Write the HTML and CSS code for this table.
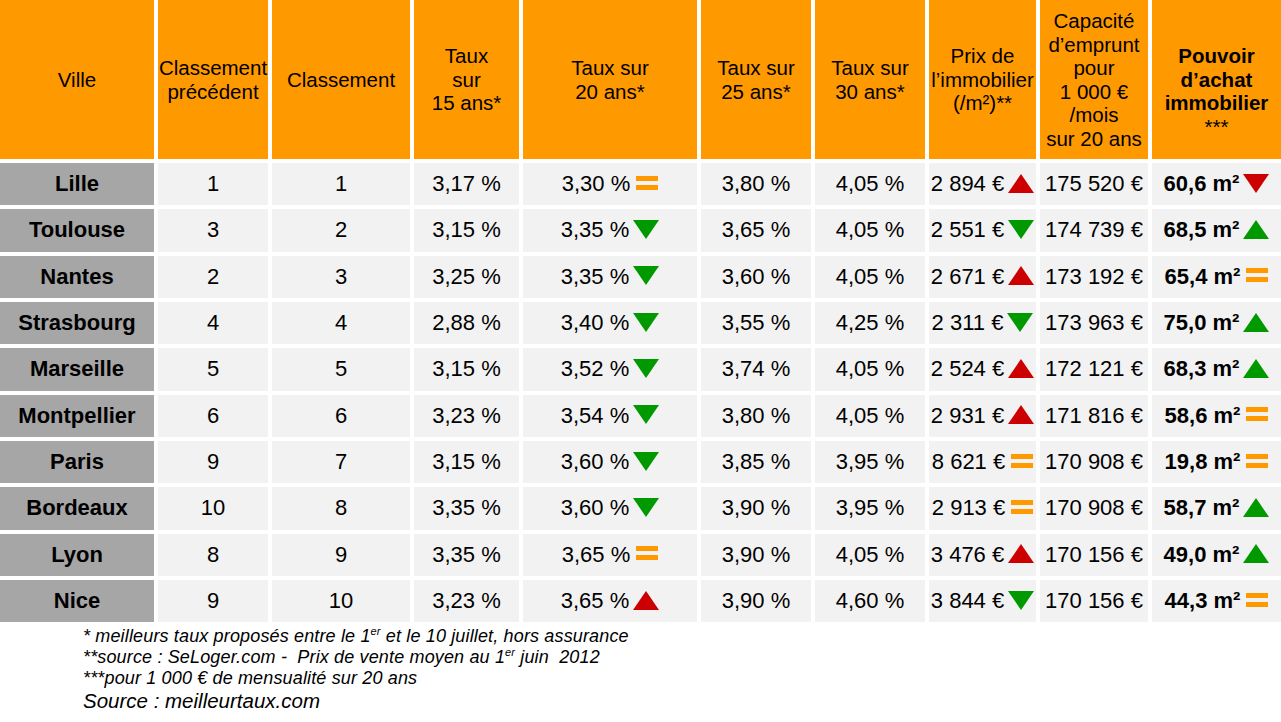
FILE: index.html
```html
<!DOCTYPE html>
<html lang="fr">
<head>
<meta charset="utf-8">
<title>Classement des villes</title>
<link rel="stylesheet" href="styles.css">
</head>
<body>
<div class="table">
  <div class="th"><div>Ville</div></div>
  <div class="th"><div>Classement<br>précédent</div></div>
  <div class="th"><div>Classement</div></div>
  <div class="th"><div>Taux<br>sur<br>15 ans*</div></div>
  <div class="th"><div>Taux sur<br>20 ans*</div></div>
  <div class="th"><div>Taux sur<br>25 ans*</div></div>
  <div class="th"><div>Taux sur<br>30 ans*</div></div>
  <div class="th"><div>Prix de<br>l’immobilier<br>(/m²)**</div></div>
  <div class="th"><div>Capacité<br>d’emprunt<br>pour<br>1 000 €<br>/mois<br>sur 20 ans</div></div>
  <div class="th th-bold"><div>Pouvoir<br>d’achat<br>immobilier<br><span class="stars">***</span></div></div>

  <div class="city">Lille</div><div class="td">1</div><div class="td">1</div><div class="td">3,17 %</div>
  <div class="td">3,30 %<svg class="eq" viewBox="0 0 22 14"><rect y="0" width="22" height="5"/><rect y="9" width="22" height="5"/></svg></div>
  <div class="td">3,80 %</div><div class="td">4,05 %</div>
  <div class="td">2 894 €<svg class="tri" viewBox="0 0 26 19"><path class="red" d="M13 0L26 19H0Z"/></svg></div>
  <div class="td">175 520 €</div>
  <div class="td b">60,6 m²<svg class="tri" viewBox="0 0 26 19"><path class="red" d="M0 0H26L13 19Z"/></svg></div>

  <div class="city">Toulouse</div><div class="td">3</div><div class="td">2</div><div class="td">3,15 %</div>
  <div class="td">3,35 %<svg class="tri" viewBox="0 0 26 19"><path class="green" d="M0 0H26L13 19Z"/></svg></div>
  <div class="td">3,65 %</div><div class="td">4,05 %</div>
  <div class="td">2 551 €<svg class="tri" viewBox="0 0 26 19"><path class="green" d="M0 0H26L13 19Z"/></svg></div>
  <div class="td">174 739 €</div>
  <div class="td b">68,5 m²<svg class="tri" viewBox="0 0 26 19"><path class="green" d="M13 0L26 19H0Z"/></svg></div>

  <div class="city">Nantes</div><div class="td">2</div><div class="td">3</div><div class="td">3,25 %</div>
  <div class="td">3,35 %<svg class="tri" viewBox="0 0 26 19"><path class="green" d="M0 0H26L13 19Z"/></svg></div>
  <div class="td">3,60 %</div><div class="td">4,05 %</div>
  <div class="td">2 671 €<svg class="tri" viewBox="0 0 26 19"><path class="red" d="M13 0L26 19H0Z"/></svg></div>
  <div class="td">173 192 €</div>
  <div class="td b">65,4 m²<svg class="eq" viewBox="0 0 22 14"><rect y="0" width="22" height="5"/><rect y="9" width="22" height="5"/></svg></div>

  <div class="city">Strasbourg</div><div class="td">4</div><div class="td">4</div><div class="td">2,88 %</div>
  <div class="td">3,40 %<svg class="tri" viewBox="0 0 26 19"><path class="green" d="M0 0H26L13 19Z"/></svg></div>
  <div class="td">3,55 %</div><div class="td">4,25 %</div>
  <div class="td">2 311 €<svg class="tri" viewBox="0 0 26 19"><path class="green" d="M0 0H26L13 19Z"/></svg></div>
  <div class="td">173 963 €</div>
  <div class="td b">75,0 m²<svg class="tri" viewBox="0 0 26 19"><path class="green" d="M13 0L26 19H0Z"/></svg></div>

  <div class="city">Marseille</div><div class="td">5</div><div class="td">5</div><div class="td">3,15 %</div>
  <div class="td">3,52 %<svg class="tri" viewBox="0 0 26 19"><path class="green" d="M0 0H26L13 19Z"/></svg></div>
  <div class="td">3,74 %</div><div class="td">4,05 %</div>
  <div class="td">2 524 €<svg class="tri" viewBox="0 0 26 19"><path class="red" d="M13 0L26 19H0Z"/></svg></div>
  <div class="td">172 121 €</div>
  <div class="td b">68,3 m²<svg class="tri" viewBox="0 0 26 19"><path class="green" d="M13 0L26 19H0Z"/></svg></div>

  <div class="city">Montpellier</div><div class="td">6</div><div class="td">6</div><div class="td">3,23 %</div>
  <div class="td">3,54 %<svg class="tri" viewBox="0 0 26 19"><path class="green" d="M0 0H26L13 19Z"/></svg></div>
  <div class="td">3,80 %</div><div class="td">4,05 %</div>
  <div class="td">2 931 €<svg class="tri" viewBox="0 0 26 19"><path class="red" d="M13 0L26 19H0Z"/></svg></div>
  <div class="td">171 816 €</div>
  <div class="td b">58,6 m²<svg class="eq" viewBox="0 0 22 14"><rect y="0" width="22" height="5"/><rect y="9" width="22" height="5"/></svg></div>

  <div class="city">Paris</div><div class="td">9</div><div class="td">7</div><div class="td">3,15 %</div>
  <div class="td">3,60 %<svg class="tri" viewBox="0 0 26 19"><path class="green" d="M0 0H26L13 19Z"/></svg></div>
  <div class="td">3,85 %</div><div class="td">3,95 %</div>
  <div class="td">8 621 €<svg class="eq" viewBox="0 0 22 14"><rect y="0" width="22" height="5"/><rect y="9" width="22" height="5"/></svg></div>
  <div class="td">170 908 €</div>
  <div class="td b">19,8 m²<svg class="eq" viewBox="0 0 22 14"><rect y="0" width="22" height="5"/><rect y="9" width="22" height="5"/></svg></div>

  <div class="city">Bordeaux</div><div class="td">10</div><div class="td">8</div><div class="td">3,35 %</div>
  <div class="td">3,60 %<svg class="tri" viewBox="0 0 26 19"><path class="green" d="M0 0H26L13 19Z"/></svg></div>
  <div class="td">3,90 %</div><div class="td">3,95 %</div>
  <div class="td">2 913 €<svg class="eq" viewBox="0 0 22 14"><rect y="0" width="22" height="5"/><rect y="9" width="22" height="5"/></svg></div>
  <div class="td">170 908 €</div>
  <div class="td b">58,7 m²<svg class="tri" viewBox="0 0 26 19"><path class="green" d="M13 0L26 19H0Z"/></svg></div>

  <div class="city">Lyon</div><div class="td">8</div><div class="td">9</div><div class="td">3,35 %</div>
  <div class="td">3,65 %<svg class="eq" viewBox="0 0 22 14"><rect y="0" width="22" height="5"/><rect y="9" width="22" height="5"/></svg></div>
  <div class="td">3,90 %</div><div class="td">4,05 %</div>
  <div class="td">3 476 €<svg class="tri" viewBox="0 0 26 19"><path class="red" d="M13 0L26 19H0Z"/></svg></div>
  <div class="td">170 156 €</div>
  <div class="td b">49,0 m²<svg class="tri" viewBox="0 0 26 19"><path class="green" d="M13 0L26 19H0Z"/></svg></div>

  <div class="city">Nice</div><div class="td">9</div><div class="td">10</div><div class="td">3,23 %</div>
  <div class="td">3,65 %<svg class="tri" viewBox="0 0 26 19"><path class="red" d="M13 0L26 19H0Z"/></svg></div>
  <div class="td">3,90 %</div><div class="td">4,60 %</div>
  <div class="td">3 844 €<svg class="tri" viewBox="0 0 26 19"><path class="green" d="M0 0H26L13 19Z"/></svg></div>
  <div class="td">170 156 €</div>
  <div class="td b">44,3 m²<svg class="eq" viewBox="0 0 22 14"><rect y="0" width="22" height="5"/><rect y="9" width="22" height="5"/></svg></div>
</div>

<div class="notes">
  <p class="note">* meilleurs taux proposés entre le 1<sup>er</sup> et le 10 juillet, hors assurance</p>
  <p class="note">**source : SeLoger.com -&nbsp; Prix de vente moyen au 1<sup>er</sup> juin&nbsp; 2012</p>
  <p class="note">***pour 1 000 € de mensualité sur 20 ans</p>
  <p class="source">Source : meilleurtaux.com</p>
</div>
</body>
</html>
```

FILE: styles.css
```css
html, body {
  margin: 0;
  padding: 0;
  background: #ffffff;
}

body {
  font-family: "Liberation Sans", Arial, sans-serif;
  color: #000000;
  width: 1281px;
}

.table {
  display: grid;
  grid-template-columns: 154px 110px 138px 105px 174px 110px 110px 107px 108px 129px;
  grid-template-rows: 159px repeat(10, 42.33px);
  column-gap: 4px;
  row-gap: 4px;
}

.th {
  background: #ff9900;
  display: flex;
  align-items: center;
  justify-content: center;
  text-align: center;
  font-size: 20.5px;
  line-height: 23.5px;
  white-space: nowrap;
}

.th-bold {
  font-weight: bold;
  padding-top: 23px;
}

.th-bold .stars {
  font-weight: normal;
}

.city {
  background: #a6a6a6;
  display: flex;
  align-items: center;
  justify-content: center;
  font-weight: bold;
  font-size: 22px;
  white-space: nowrap;
}

.td {
  background: #f2f2f2;
  display: flex;
  align-items: center;
  justify-content: center;
  font-size: 22px;
  white-space: nowrap;
}

.td.b {
  font-weight: bold;
}

.tri {
  width: 26px;
  height: 19px;
  margin-left: 4px;
  margin-top: -2px;
  flex: none;
}

.eq {
  width: 22px;
  height: 14px;
  margin-left: 6px;
  margin-top: -3px;
  flex: none;
  fill: #ff9900;
}

.red {
  fill: #cc0000;
}

.green {
  fill: #009900;
}

.notes {
  padding-left: 83px;
  margin-top: 4px;
  font-style: italic;
}

.note {
  margin: 0;
  font-size: 18px;
  letter-spacing: 0.15px;
  line-height: 21px;
}

.note sup {
  font-size: 11px;
  line-height: 0;
  vertical-align: 7px;
}

.source {
  margin: 0;
  font-size: 20.5px;
  line-height: 24px;
}
```
